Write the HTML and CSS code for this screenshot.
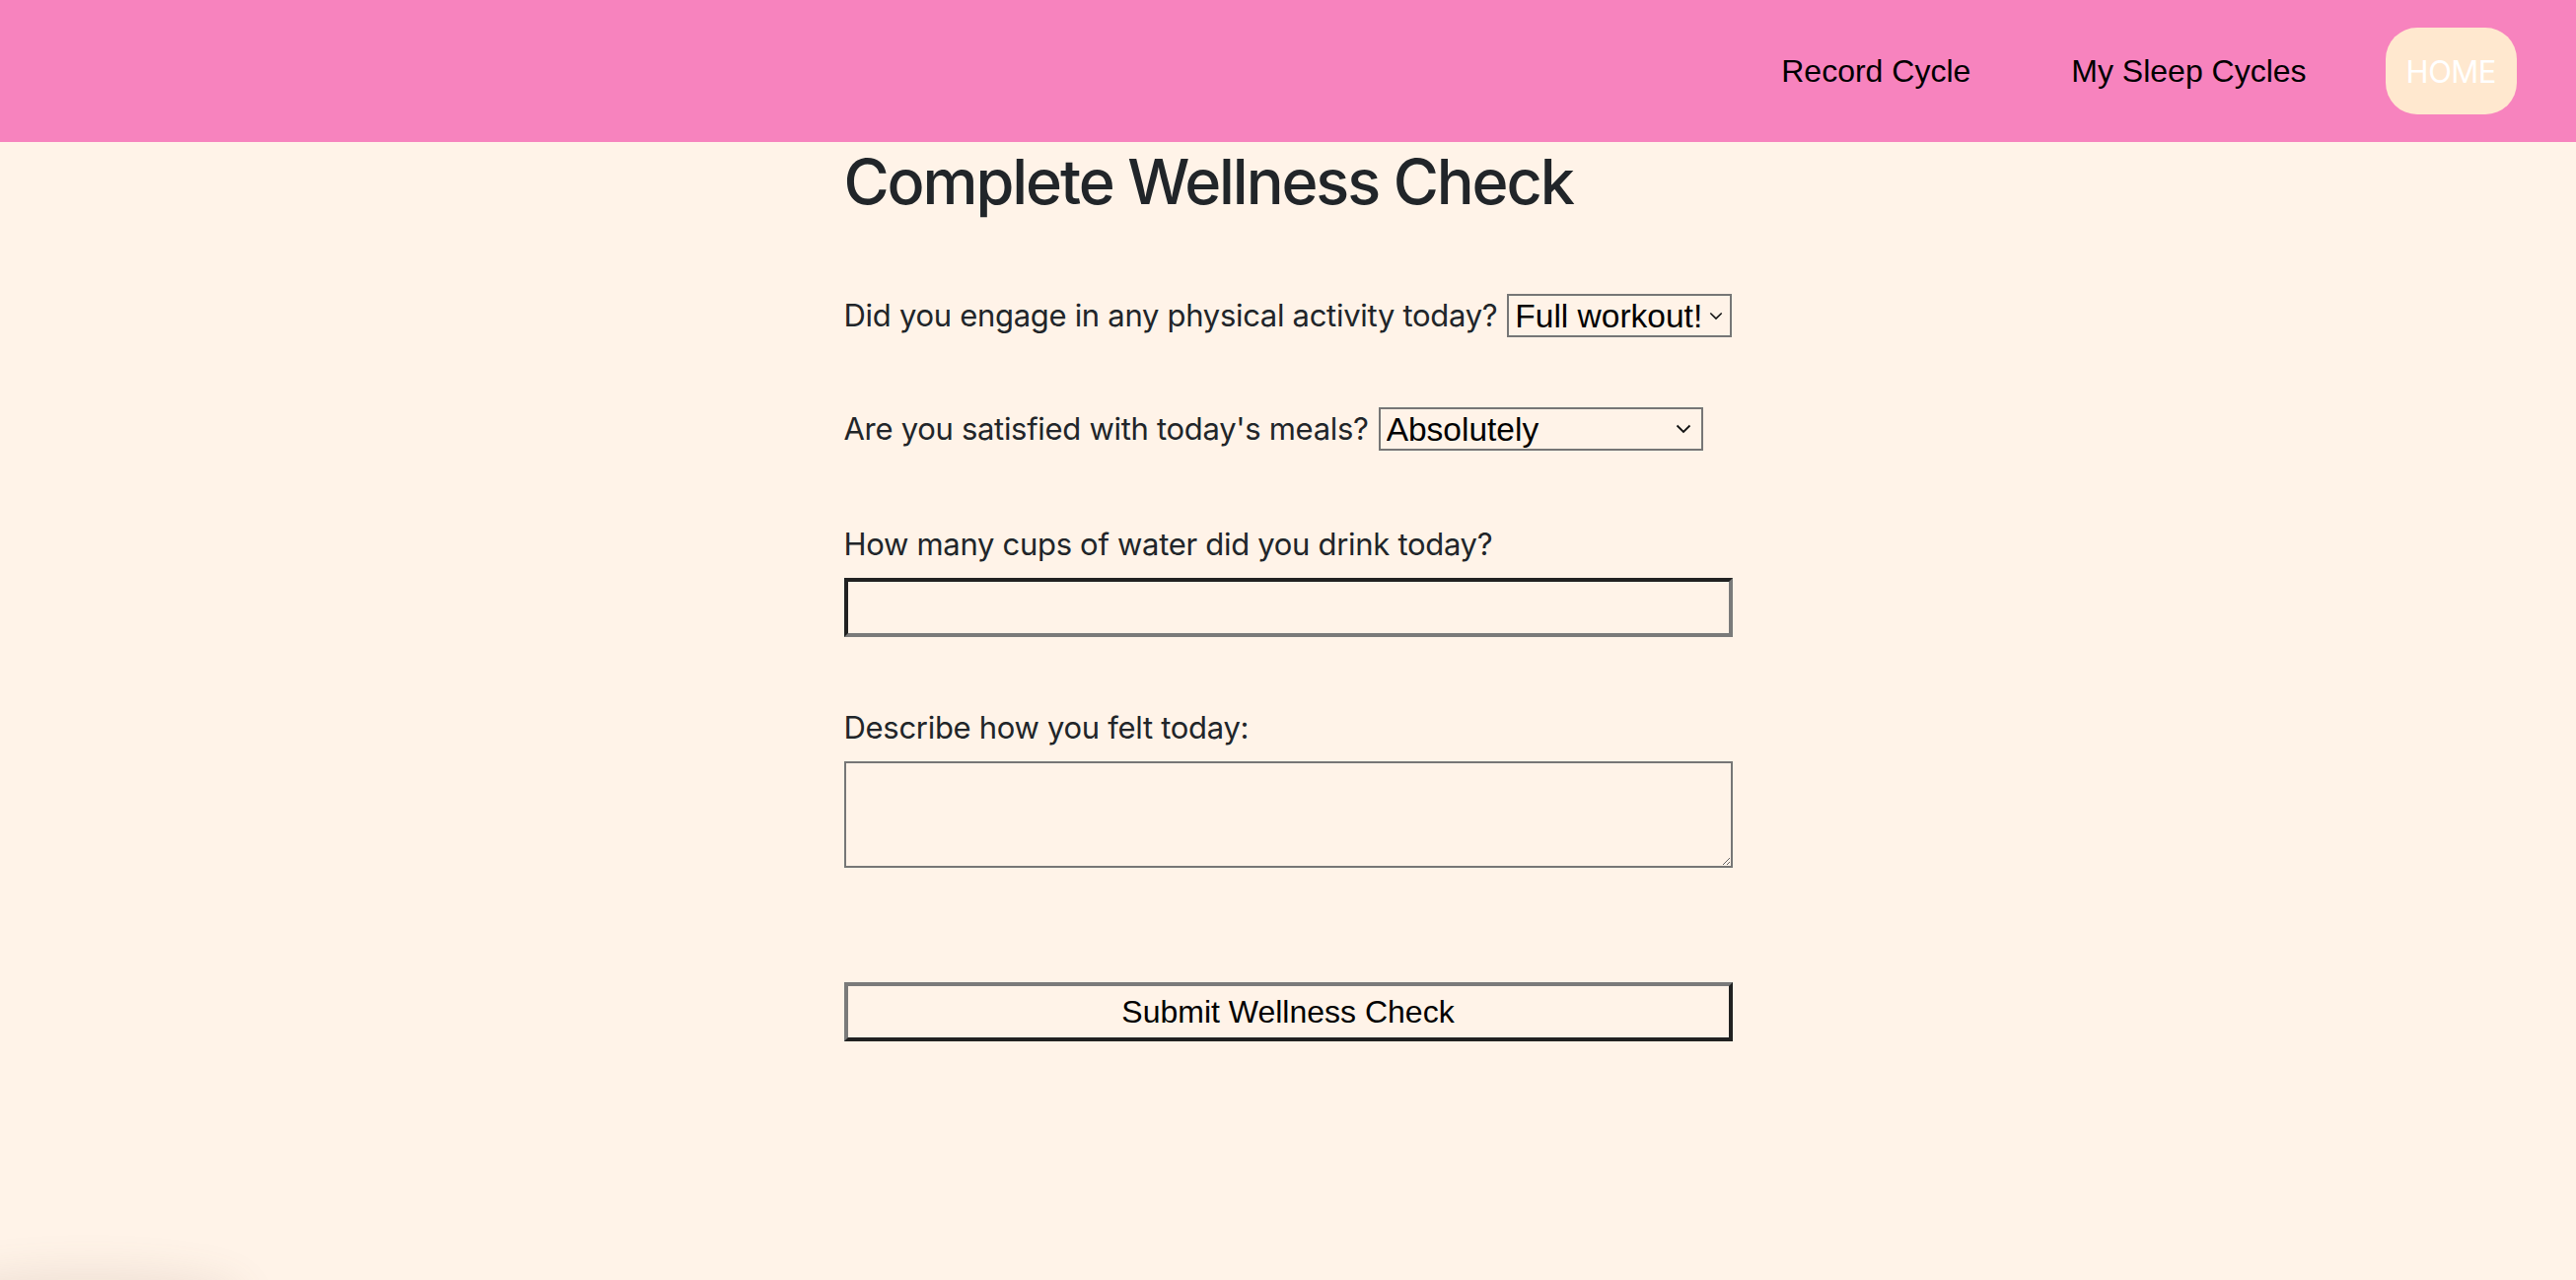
FILE: index.html
```html
<!DOCTYPE html>
<html lang="en">
<head>
<meta charset="utf-8">
<title>Complete Wellness Check</title>
<link rel="stylesheet" href="styles.css">
</head>
<body>
<header class="topbar">
  <nav class="nav-links">
    <a class="nav-link" href="#">Record Cycle</a>
    <a class="nav-link" href="#">My Sleep Cycles</a>
    <a class="nav-link home-btn" href="#">HOME</a>
  </nav>
</header>
<main class="wellness">
  <h1 class="title">Complete Wellness Check</h1>
  <form class="wellness-form">
    <div class="row inline-row">
      <label class="label" for="activity">Did you engage in any physical activity today?</label>
      <select class="select select-activity" id="activity">
        <option>Full workout!</option>
        <option>A little</option>
        <option>None</option>
      </select>
    </div>
    <div class="row inline-row row-meals">
      <label class="label" for="meals">Are you satisfied with today's meals?</label>
      <select class="select select-meals" id="meals">
        <option>Absolutely</option>
        <option>Could have been better</option>
        <option>Not really</option>
      </select>
    </div>
    <div class="row block-row row-water">
      <label class="label block-label" for="water">How many cups of water did you drink today?</label>
      <input class="text-input" id="water" type="text">
    </div>
    <div class="row block-row row-feel">
      <label class="label block-label" for="feel">Describe how you felt today:</label>
      <textarea class="textarea" id="feel"></textarea>
    </div>
    <button class="submit" type="button">Submit Wellness Check</button>
  </form>
</main>
<div class="corner-shadow"></div>
</body>
</html>
```

FILE: styles.css
```css
html, body {
  margin: 0;
  padding: 0;
}
body {
  background: #fff3e8;
  font-family: Inter, "Noto Sans", sans-serif;
  color: #212529;
  min-height: 1298px;
  overflow: hidden;
}
.topbar {
  background: #f783be;
  height: 144px;
  display: flex;
  justify-content: flex-end;
  align-items: center;
  padding-right: 60px;
  box-sizing: border-box;
}
.nav-links {
  display: flex;
  align-items: center;
  gap: 58px;
}
.nav-link {
  font-family: "Liberation Sans", Arial, sans-serif;
  font-size: 32px;
  color: #000;
  text-decoration: none;
  padding: 0 22px;
}
.home-btn {
  font-family: Inter, sans-serif;
  font-size: 31px;
  color: #fff;
  background: #ffe8cf;
  border-radius: 32px;
  height: 88px;
  display: flex;
  align-items: center;
  padding: 0 21px;
  letter-spacing: -0.5px;
}
.wellness {
  width: 901px;
  margin: 0 auto;
}
.title {
  margin: 0;
  font-size: 63px;
  font-weight: 500;
  line-height: 80px;
  padding-top: 0;
  letter-spacing: -2.1px;
}
.wellness-form {
  display: flex;
  flex-direction: column;
  padding-top: 74px;
}
.label {
  font-size: 31px;
  letter-spacing: -0.3px;
  line-height: 44px;
}
.inline-row {
  display: flex;
  align-items: center;
  gap: 10px;
}
.row-meals {
  margin-top: 71px;
}
.select {
  font-family: "Liberation Sans", Arial, sans-serif;
  font-size: 33.5px;
  color: #000;
  background: transparent;
  border: 2px solid #767676;
  border-radius: 0;
  height: 44px;
  padding: 0 40px 0 6px;
  appearance: none;
  background-image: url("data:image/svg+xml,%3Csvg xmlns='http://www.w3.org/2000/svg' width='16' height='10' viewBox='0 0 16 10'%3E%3Cpath d='M1.5 1.5 L8 8 L14.5 1.5' fill='none' stroke='%23111' stroke-width='1.8'/%3E%3C/svg%3E");
  background-repeat: no-repeat;
  background-position: right 10px center;
  background-size: 16px 10px;
}
.select-activity {
  width: 228px;
  padding-right: 28px;
  background-position: right 7px center;
  background-size: 14px 9px;
}
.select-meals {
  width: 329px;
}
.block-row {
  display: flex;
  flex-direction: column;
}
.row-water {
  margin-top: 73px;
}
.block-label {
  margin-bottom: 12px;
}
.text-input {
  box-sizing: border-box;
  width: 901px;
  height: 60px;
  background: transparent;
  border: 4px solid #7a7a7a;
  border-top-color: #212121;
  border-left-color: #212121;
  margin: 0;
  font-size: 32px;
}
.row-feel {
  margin-top: 70px;
}
.textarea {
  box-sizing: border-box;
  width: 901px;
  height: 108px;
  background: transparent;
  border: 2px solid #767676;
  margin: 0;
  resize: vertical;
  font-size: 32px;
}
.submit {
  box-sizing: border-box;
  margin-top: 116px;
  width: 901px;
  height: 60px;
  background: transparent;
  border: 4px solid #7a7a7a;
  border-right-color: #212121;
  border-bottom-color: #212121;
  font-family: "Liberation Sans", Arial, sans-serif;
  font-size: 32px;
  color: #000;
  padding: 0;
}
.corner-shadow {
  position: fixed;
  left: -60px;
  bottom: -40px;
  width: 300px;
  height: 40px;
  box-shadow: 0 0 40px 10px rgba(120, 100, 80, 0.12);
  border-radius: 50%;
}
```
